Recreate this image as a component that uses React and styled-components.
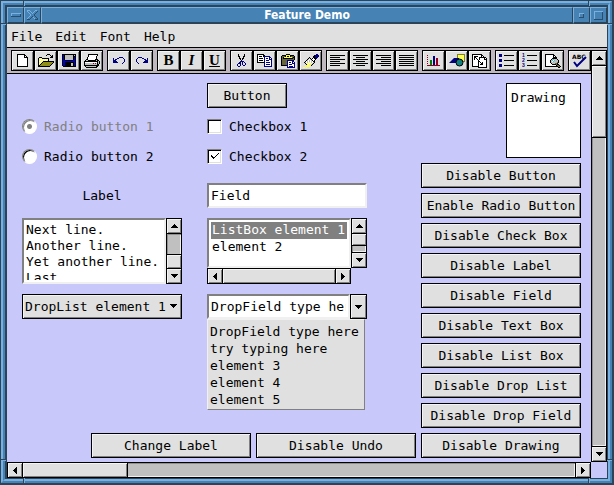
import styled, { createGlobalStyle, css } from 'styled-components';

const GlobalStyle = createGlobalStyle`
	* {
		box-sizing: border-box;
	}

	body {
		margin: 0;
		background-color: #4682b4;
	}

	body,
	button,
	input,
	select,
	textarea {
		font-family: 'DejaVu Sans Mono', monospace;
		font-size: 13px;
		line-height: 17px;
		color: #000;
	}
`;

const steel = '#4682b4';
const steelLight = '#78b0e0';
const steelDark = '#2b4459';

const raised = css`
	background-color: #e0e0e0;
	box-shadow: inset 1px 1px 0 #f4f4f4, inset -1px -1px 0 #808080;
`;

const sunken = css`
	background-color: #fff;
	border: 2px solid;
	border-color: #808080 #f0f0f0 #f0f0f0 #808080;
`;

/* Window frame */

const Frame = styled.div`
	position: relative;
	min-height: 100vh;
	display: flex;
	border: solid ${steelDark};
	border-width: 1px 2px 2px 1px;
`;

const OuterRidge = styled.div`
	flex: 1;
	min-width: 0;
	display: flex;
	border: 2px solid;
	border-color: ${steelLight} ${steel} ${steel} ${steelLight};
`;

const InnerRidge = styled.div`
	flex: 1;
	min-width: 0;
	display: flex;
	border: 2px solid;
	border-color: ${steel} ${steelLight} ${steelLight} ${steel};
`;

const Window = styled.div`
	flex: 1;
	min-width: 0;
	display: flex;
	flex-direction: column;
	border: solid ${steelDark};
	border-width: 2px 1px 1px 2px;
`;

const Notch = styled.i`
	position: absolute;
	${(p) => p.$edge}: 0;
	${(p) => p.$near}: 22px;
	background-color: ${steelLight};
	${(p) =>
		p.$edge === 'top' || p.$edge === 'bottom'
			? `width: 2px; height: 5px; border-left: 1px solid ${steelDark};`
			: `width: 5px; height: 2px; border-top: 1px solid ${steelDark};`}
`;

const TitleBar = styled.header`
	display: grid;
	grid-template-columns: 17px 17px 1fr 17px 17px;
	height: 17px;
`;

const titlePiece = css`
	border: solid;
	border-width: 1px 1px 2px 1px;
	border-color: ${steelLight} ${steelDark} ${steelDark} ${steelLight};
	background-color: ${steel};
`;

const TitleButton = styled.button`
	${titlePiece}
	display: grid;
	place-items: center;
	padding: 0;
`;

const Title = styled.h1`
	${titlePiece}
	margin: 0;
	font: bold 12px/14px 'DejaVu Sans Condensed', 'DejaVu Sans', sans-serif;
	text-align: center;
	color: #fff;
`;

/* Menu and toolbar */

const MenuBar = styled.nav`
	display: flex;
	gap: 5px;
	height: 24px;
	background-color: #e0e0e0;
	border-bottom: 1px solid #000;
`;

const MenuItem = styled.button`
	padding: 2px 4px 0;
	border: 0;
	background: none;
`;

const Main = styled.div`
	flex: 1;
	display: grid;
	grid-template-columns: minmax(0, 1fr) 16px;
	grid-template-rows: 1fr 16px;
	background-color: #c8c8fa;
`;

const Pane = styled.div`
	display: flex;
	flex-direction: column;
`;

const Toolbar = styled.div`
	display: flex;
	gap: 4px;
	padding: 2px 0 2px 4px;
	background-color: #c0b8c0;
	border-bottom: 1px solid #000;
`;

const ToolGroup = styled.div`
	display: flex;
`;

const Tool = styled.button`
	${raised}
	display: grid;
	place-items: center;
	width: 23px;
	height: 21px;
	padding: 0;
	border: 1px solid #000;
	font: bold 15px/15px 'Liberation Serif', serif;
	font-style: ${(p) => (p.$italic ? 'italic' : 'normal')};
	text-decoration: ${(p) => (p.$underline ? 'underline' : 'none')};

	& svg {
		display: block;
	}
`;

/* Scroll bars */

const Bar = styled.div`
	display: flex;
	flex-direction: ${(p) => (p.$vertical ? 'column' : 'row')};
	${(p) => (p.$vertical ? 'width: 16px;' : 'height: 16px;')}
	border: 1px solid #000;
	background-color: #c0c0c0;
`;

const BarArrow = styled.button`
	${raised}
	flex: none;
	display: grid;
	place-items: center;
	width: 14px;
	height: 14px;
	padding: 0;
	border: 0;
`;

const BarTrack = styled.div`
	flex: 1;
	min-width: 0;
	min-height: 0;
	display: flex;
	flex-direction: ${(p) => (p.$vertical ? 'column' : 'row')};
	justify-content: ${(p) => (p.$atEnd ? 'flex-end' : 'flex-start')};
	border: solid #000;
	border-width: ${(p) => (p.$vertical ? '1px 0' : '0 1px')};
	box-shadow: inset 1px 1px 0 #909090, inset -1px -1px 0 #f0f0f0;
`;

const BarThumb = styled.div`
	${raised}
	flex: 0 0 ${(p) => p.$size};
	border: 0 solid #000;
	${(p) => {
		if (p.$size === '100%') return '';
		const side = p.$atEnd
			? p.$vertical ? 'top' : 'left'
			: p.$vertical ? 'bottom' : 'right';
		return `border-${side}-width: 1px;`;
	}}
`;

const MainScrollColumn = styled.div`
	display: flex;
	padding-top: 2px;
	background-color: #c0b8c0;
`;

/* Form controls */

const Form = styled.form`
	flex: 1;
	display: flex;
	gap: 5px;
	padding: 9px 10px 4px 15px;
`;

const Side = styled.div`
	flex: 1;
	display: flex;
	flex-direction: column;
	justify-content: space-between;
`;

const Widgets = styled.div`
	display: grid;
	grid-template-columns: 160px 160px;
	grid-template-rows: 36px 30px 34px 35px 76px 25px;
	column-gap: 25px;
	align-items: start;
`;

const Actions = styled.div`
	display: flex;
	justify-content: flex-end;
	gap: 5px;
`;

const ButtonColumn = styled.div`
	display: flex;
	flex-direction: column;
	gap: 5px;
`;

const Button = styled.button`
	${raised}
	width: ${(p) => (p.$small ? '80px' : '160px')};
	height: 25px;
	padding: 0;
	border: 1px solid #000;
	white-space: nowrap;
	grid-column: ${(p) => (p.$small ? '2' : 'auto')};
`;

const Drawing = styled.div`
	align-self: flex-end;
	width: 75px;
	height: 75px;
	padding: 5px 4px;
	border: 1px solid #000;
	background-color: #fff;
`;

const Choice = styled.label`
	position: relative;
	display: flex;
	align-items: center;
	gap: 7px;
	height: 15px;
	color: ${(p) => (p.$disabled ? '#808080' : '#000')};

	& svg {
		position: absolute;
		left: 4px;
		top: 4px;
		pointer-events: none;
	}
`;

const Radio = styled.input`
	appearance: none;
	width: 15px;
	height: 15px;
	margin: 0;
	border: 1px solid;
	border-color: #808080 #fff #fff #808080;
	border-radius: 50%;
	background-color: #fff;
	box-shadow: inset 1px 1px 0 #000;

	&:disabled {
		box-shadow: inset 1px 1px 0 #808080;
	}

	&:checked {
		background-image: radial-gradient(circle, #808080 2px, transparent 3px);
	}
`;

const Checkbox = styled.input`
	appearance: none;
	width: 15px;
	height: 15px;
	margin: 0;
	border: 1px solid;
	border-color: #808080 #fff #fff #808080;
	background-color: #fff;
	box-shadow: inset 1px 1px 0 #000, inset -1px -1px 0 #e0e0e0;
`;

const Caption = styled.p`
	margin: 0;
	line-height: 25px;
	text-align: center;
`;

const Field = styled.input`
	${sunken}
	width: 100%;
	min-width: 0;
	height: 25px;
	padding: 0 2px;
	border-radius: 0;
`;

const TextBox = styled.div`
	display: flex;
	height: 66px;
`;

const TextWell = styled.div`
	${sunken}
	flex: 1;
	min-width: 0;
	padding: 2px 0;
`;

const TextArea = styled.textarea`
	display: block;
	width: 100%;
	height: 58px;
	padding: 0 2px;
	border: 0;
	line-height: 16px;
	white-space: pre;
	overflow: hidden;
	resize: none;
`;

const ListBox = styled.div`
	display: grid;
	grid-template-columns: minmax(0, 1fr) 16px;
	grid-template-rows: 50px 16px;
`;

const ListWell = styled.div`
	${sunken}
	padding: 2px;
	overflow: hidden;
`;

const List = styled.select`
	display: block;
	width: 100%;
	height: 42px;
	padding: 0;
	border: 0;
	outline: 0;
	border-radius: 0;
	background-color: #fff;
	overflow: hidden;
	scrollbar-width: none;

	& option {
		min-height: 17px;
		padding: 0 1px;
	}

	& option:checked {
		background: #808080 linear-gradient(#808080, #808080);
		-webkit-text-fill-color: #fff;
	}
`;

const DropListShell = styled.div`
	position: relative;

	& svg {
		position: absolute;
		right: 5px;
		top: 10px;
		pointer-events: none;
	}
`;

const DropList = styled.select`
	${raised}
	appearance: none;
	display: block;
	width: 100%;
	height: 25px;
	padding: 0 2px;
	border: 1px solid #000;
	border-radius: 0;
`;

const DropField = styled.div`
	position: relative;
	display: flex;
`;

const DropButton = styled.button`
	${raised}
	flex: none;
	display: grid;
	place-items: center;
	width: 17px;
	height: 25px;
	padding: 0;
	border: 1px solid #000;
`;

const Popup = styled.ul`
	position: absolute;
	top: 100%;
	left: 0;
	right: 2px;
	margin: 0;
	padding: 3px 2px 1px;
	list-style: none;
	background-color: #e0e0e0;
	border: 1px solid;
	border-color: #f0f0f0 #808080 #808080 #f0f0f0;
	white-space: nowrap;
`;

/* Drawings */

const palette = {
	k: '#000',
	w: '#fff',
	g: '#c0c0c0',
	y: '#ffff50',
	o: '#909018',
	d: '#66663a',
	b: '#0000d0',
	n: '#000080',
	r: '#900020',
	G: '#008000',
	c: '#40c8d0',
	s: steelLight,
	t: '#294d6d',
};

// Each string is a row, each letter a palette colour.
const Pixels = ({ rows }) => {
	const width = Math.max(...rows.map((row) => row.length));
	return (
		<svg
			width={width}
			height={rows.length}
			shapeRendering="crispEdges"
			aria-hidden="true"
		>
			{rows.flatMap((row, y) =>
				[...row].map((cell, x) =>
					palette[cell] ? (
						<rect
							key={`${x}-${y}`}
							x={x}
							y={y}
							width="1"
							height="1"
							fill={palette[cell]}
						/>
					) : null
				)
			)}
		</svg>
	);
};

const mirror = (rows) => rows.map((row) => [...row].reverse().join(''));

const arrows = {
	up: ['...k...', '..kkk..', '.kkkkk.', 'kkkkkkk'],
	down: ['kkkkkkk', '.kkkkk.', '..kkk..', '...k...'],
	left: ['...k', '..kk', '.kkk', 'kkkk', '.kkk', '..kk', '...k'],
	right: ['k...', 'kk..', 'kkk.', 'kkkk', 'kkk.', 'kk..', 'k...'],
};

const undoRows = [
	'......nnnn..',
	'n...nn....n.',
	'n.nn.......n',
	'nnn........n',
	'nnnn.......n',
	'nnnnn.....n.',
	'.........n..',
];

const art = {
	minimize: ['ssssssssss', 's........t', 's........t', 'tttttttttt'],
	close: [
		'sss.....ss.',
		's..s...s..t',
		'.s..s.s..t.',
		'..s..s..t..',
		'...s...t...',
		'...s...t...',
		'..s..t..t..',
		'.s..t.s..t.',
		's..t...s..t',
		'ttt.....ttt',
	],
	iconify: ['sssss', 's...t', 's...t', 's...t', 'ttttt'],
	maximize: [
		'sssssssss',
		's.......t',
		's.......t',
		's.......t',
		's.......t',
		's.......t',
		's.......t',
		's.......t',
		'ttttttttt',
	],
	check: ['.......k', '......k.', 'k....k..', 'kk..k...', '.kkk....', '..k.....'],
	page: [
		'kkkkkkkk...',
		'kwwwwwwkk..',
		'kwwwwwwkwk.',
		'kwwwwwwkkkk',
		'kwwwwwwwwwk',
		'kwwwwwwwwwk',
		'kwwwwwwwwwk',
		'kwwwwwwwwwk',
		'kwwwwwwwwwk',
		'kwwwwwwwwwk',
		'kwwwwwwwwwk',
		'kwwwwwwwwwk',
		'kkkkkkkkkkk',
	],
	open: [
		'.........kkk....',
		'........k...k.k.',
		'.............kk.',
		'.kkk........kkk.',
		'kywykkkkkkk.....',
		'kwywywywywk.....',
		'kywywywywyk.....',
		'kwywykkkkkkkkkkk',
		'kywykooooooooook',
		'kwykooooooooook.',
		'kykooooooooook..',
		'kkooooooooook...',
		'kkkkkkkkkkkk....',
	],
	save: [
		'kkkkkkkkkkkkkk',
		'kbkggggggggkgk',
		'kbkggggggggkkk',
		'kbkggggggggkbk',
		'kbkggggggggkbk',
		'kbkggggggggkbk',
		'kbbkkkkkkkkbbk',
		'kbbbbbbbbbbbbk',
		'kbbkkkkkkkkkbk',
		'kbbkkkkkkggkbk',
		'kbbkkkkkkggkbk',
		'kbbkkkkkkggkbk',
		'.kkkkkkkkkkkkk',
	],
	print: [
		'....kkkkkkkkkk..',
		'....kwwwwwwwwk..',
		'....kwwwwwwwk...',
		'...kwwwwwwwwk...',
		'...kwwwwwwwwk...',
		'..kkwwwwwwwkkk..',
		'.kggkkkkkkkkgkk.',
		'kkkkkkkkkkkkkkgk',
		'kwwwwwwwwwwwwkgk',
		'kggggggggrgrgkgk',
		'kggggggggggggkk.',
		'kkkkkkkkkkkkkkk.',
		'.kggggggggggkk..',
		'..kkkkkkkkkkk...',
	],
	undo: undoRows,
	redo: mirror(undoRows),
	cut: [
		'.k.....k.',
		'.k.....k.',
		'.kk...kk.',
		'..k...k..',
		'..kk.kk..',
		'...k.k...',
		'....k....',
		'...nnnn..',
		'..nn.n.n.',
		'.nnn.n..n',
		'n..n.n..n',
		'n..n..nn.',
		'.nn......',
	],
	copy: [
		'kkkkkkk........',
		'kwwwwwkk.......',
		'kwkkkwknnnnnn..',
		'kwwwwwwnwwwwnn.',
		'kwkkkkwnwnnwnwn',
		'kwwwwwwnwwwwnnn',
		'kwkkkkwnwnnnwwn',
		'kwwwwwwnwwwwwwn',
		'kkkkkkknwnnnnwn',
		'.......nwwwwwwn',
		'.......nwnnnnwn',
		'.......nwwwwwwn',
		'.......nnnnnnnn',
	],
	paste: [
		'......kkkk......',
		'..kkkkyyyykkkk..',
		'.kdddkykkykdddk.',
		'.kdkyyyyyyyydkk.',
		'.kdkkkkkkkkkkdk.',
		'.kddddddddddddk.',
		'.kdddddnnnnnnk..',
		'.kdddddnwwwwnn..',
		'.kdddddnwnnwnwn.',
		'.kdddddnwwwwnnn.',
		'.kdddddnwnnnwwn.',
		'.kkkkkknwwwwwwn.',
		'.......nwnnnnwn.',
		'.......nnnnnnnn.',
	],
	brush: [
		'.............nn.',
		'...........knnnn',
		'..........kknnnn',
		'......k...kknnn.',
		'.....kgk.kwkkn..',
		'....kgwgkwwwk...',
		'...kgwgwgkwk....',
		'..kwgwgwgwkk....',
		'.kgwgwywgwgk....',
		'..kywywywgk.....',
		'...kywyygk......',
		'...yyyyyk.......',
		'..y.yyy.........',
		'yy.y............',
	],
	chart: [
		'r............',
		'......nn.....',
		'r.....nn.....',
		'......nn.rr..',
		'r.....nn.rr..',
		'...GG.nn.rr..',
		'r..GG.nn.rr..',
		'...GG.nn.rr..',
		'r..GG.nn.rr..',
		'...GG.nn.rr..',
		'rrrrrrrrrrrrr',
	],
	frames: [
		'kkkkkkkkkk.....',
		'kwwwwwwwwkk....',
		'kwkkkkwwwkwk...',
		'kwkkwwwkkkkkkk.',
		'kwkwkwwkwwwwkwk',
		'kwkwwkwkwwwwkkk',
		'kwwwwwkwwwwwwwk',
		'kwwwwwkkwwwwwwk',
		'kwwwwwkwkwkwwwk',
		'kwwwwwkwwkkwwwk',
		'kwwwwwkwkkkwwwk',
		'kwwwwwkwwwwwwwk',
		'kkkkkkkwwwwwwwk',
		'......kkkkkkkkk',
	],
	preview: [
		'kkkkkkkkk.......',
		'kwwwwwwwkk......',
		'kwwwwwwwkwk.....',
		'kwwwwwwwkkkk....',
		'kwwwwwwkkkkk....',
		'kwwwwwkgcgggk...',
		'kwwwwkgcwcgggk..',
		'kwwwwkgwcggggk..',
		'kwwwwkggggggdk..',
		'kwwwwwkgggddk...',
		'kwwwwwwkkkkdkk..',
		'kwwwwwwwwwwkddk.',
		'kkkkkkkkkkkkkddk',
		'.............kk.',
	],
	bullets: [
		'nnn............',
		'nnn..kkkkkkkkkk',
		'nnn............',
		'...............',
		'...............',
		'nnn............',
		'nnn..kkkkkkkkkk',
		'nnn............',
		'...............',
		'...............',
		'nnn............',
		'nnn..kkkkkkkkkk',
		'nnn............',
	],
};

const alignLines = (short, before) =>
	Array.from({ length: 11 }, (_, i) => {
		if (i % 2) return '';
		if (i % 4 === 0) return 'k'.repeat(15);
		return '.'.repeat(before) + 'k'.repeat(short);
	});

const ShapesIcon = () => (
	<svg width="16" height="13" aria-hidden="true">
		<rect x="8" y="0" width="8" height="7" fill="#ffff50" />
		<rect x="8.5" y="0.5" width="7" height="7" fill="none" stroke="#000" strokeDasharray="1 1" />
		<path d="M0 9L5 4h5v5z" fill="#000080" />
		<circle cx="10.5" cy="8.5" r="3.5" fill="#108080" stroke="#000" />
	</svg>
);

const NumberedIcon = () => (
	<svg width="15" height="15" aria-hidden="true">
		<g fill="#000080" fontFamily="Liberation Sans" fontSize="5" fontWeight="bold">
			<text x="0" y="4">1</text>
			<text x="0" y="9">2</text>
			<text x="0" y="14">3</text>
		</g>
		<path d="M5 2.5h10M5 7.5h10M5 12.5h10" stroke="#000" />
	</svg>
);

const SpellingIcon = () => (
	<svg width="15" height="15" aria-hidden="true">
		<text x="0" y="6" fontFamily="DejaVu Sans" fontSize="6">
			ABC
		</text>
		<path d="M2 9l3 4 9-9" fill="none" stroke="#000080" strokeWidth="2" />
	</svg>
);

const toolGroups = [
	[
		{ label: 'New', icon: <Pixels rows={art.page} /> },
		{ label: 'Open', icon: <Pixels rows={art.open} /> },
		{ label: 'Save', icon: <Pixels rows={art.save} /> },
		{ label: 'Print', icon: <Pixels rows={art.print} /> },
	],
	[
		{ label: 'Undo', icon: <Pixels rows={art.undo} /> },
		{ label: 'Redo', icon: <Pixels rows={art.redo} /> },
	],
	[
		{ label: 'Bold', icon: 'B' },
		{ label: 'Italic', icon: 'I', italic: true },
		{ label: 'Underline', icon: 'U', underline: true },
	],
	[
		{ label: 'Cut', icon: <Pixels rows={art.cut} /> },
		{ label: 'Copy', icon: <Pixels rows={art.copy} /> },
		{ label: 'Paste', icon: <Pixels rows={art.paste} /> },
		{ label: 'Format painter', icon: <Pixels rows={art.brush} /> },
	],
	[
		{ label: 'Align left', icon: <Pixels rows={alignLines(10, 0)} /> },
		{ label: 'Align center', icon: <Pixels rows={alignLines(9, 3)} /> },
		{ label: 'Align right', icon: <Pixels rows={alignLines(10, 5)} /> },
		{ label: 'Justify', icon: <Pixels rows={alignLines(15, 0)} /> },
	],
	[
		{ label: 'Chart', icon: <Pixels rows={art.chart} /> },
		{ label: 'Shapes', icon: <ShapesIcon /> },
		{ label: 'Resize', icon: <Pixels rows={art.frames} /> },
	],
	[
		{ label: 'Bullets', icon: <Pixels rows={art.bullets} /> },
		{ label: 'Numbering', icon: <NumberedIcon /> },
		{ label: 'Preview', icon: <Pixels rows={art.preview} /> },
	],
	[{ label: 'Spelling', icon: <SpellingIcon /> }],
];

const notches = [
	['top', 'left'],
	['top', 'right'],
	['bottom', 'left'],
	['bottom', 'right'],
	['left', 'top'],
	['left', 'bottom'],
	['right', 'top'],
	['right', 'bottom'],
];

const ScrollBar = ({ vertical, size, atEnd }) => (
	<Bar $vertical={vertical}>
		<BarArrow type="button" aria-label={vertical ? 'Scroll up' : 'Scroll left'}>
			<Pixels rows={vertical ? arrows.up : arrows.left} />
		</BarArrow>
		<BarTrack $vertical={vertical} $atEnd={atEnd}>
			<BarThumb $vertical={vertical} $atEnd={atEnd} $size={size} />
		</BarTrack>
		<BarArrow type="button" aria-label={vertical ? 'Scroll down' : 'Scroll right'}>
			<Pixels rows={vertical ? arrows.down : arrows.right} />
		</BarArrow>
	</Bar>
);

const toggles = [
	'Disable Button',
	'Enable Radio Button',
	'Disable Check Box',
	'Disable Label',
	'Disable Field',
	'Disable Text Box',
	'Disable List Box',
	'Disable Drop List',
	'Disable Drop Field',
	'Disable Drawing',
];

const suggestions = [
	'DropField type here',
	'try typing here',
	'element 3',
	'element 4',
	'element 5',
];

const DemoForm = () => (
	<Form>
		<Side>
			<Widgets>
				<Button type="button" $small>Button</Button>
				<Choice $disabled>
					<Radio type="radio" name="radio" defaultChecked disabled />
					Radio button 1
				</Choice>
				<Choice>
					<Checkbox type="checkbox" />
					Checkbox 1
				</Choice>
				<Choice>
					<Radio type="radio" name="other-radio" />
					Radio button 2
				</Choice>
				<Choice>
					<Checkbox type="checkbox" defaultChecked />
					<Pixels rows={art.check} />
					Checkbox 2
				</Choice>
				<Caption>Label</Caption>
				<Field aria-label="Field" defaultValue="Field" />
				<TextBox>
					<TextWell>
						<TextArea
							aria-label="Text box"
							defaultValue={'Next line.\nAnother line.\nYet another line.\nLast'}
						/>
					</TextWell>
					<ScrollBar vertical atEnd size="41%" />
				</TextBox>
				<ListBox>
					<ListWell>
						<List size={2} aria-label="List box" defaultValue="1">
							<option value="1">ListBox element 1</option>
							<option value="2">element 2</option>
						</List>
					</ListWell>
					<ScrollBar vertical size="64%" />
					<ScrollBar size="100%" />
				</ListBox>
				<DropListShell>
					<DropList aria-label="Drop list">
						<option>DropList element 1</option>
					</DropList>
					<Pixels rows={arrows.down} />
				</DropListShell>
				<DropField>
					<Field
						role="combobox"
						aria-label="Drop field"
						aria-expanded="true"
						aria-controls="suggestions"
						defaultValue="DropField type here"
					/>
					<DropButton type="button" aria-label="Show suggestions">
						<Pixels rows={arrows.down} />
					</DropButton>
					<Popup id="suggestions" role="listbox">
						{suggestions.map((text) => (
							<li key={text} role="option" aria-selected="false">
								{text}
							</li>
						))}
					</Popup>
				</DropField>
			</Widgets>
			<Actions>
				<Button type="button">Change Label</Button>
				<Button type="button">Disable Undo</Button>
			</Actions>
		</Side>
		<ButtonColumn>
			<Drawing>Drawing</Drawing>
			{toggles.map((text) => (
				<Button type="button" key={text}>
					{text}
				</Button>
			))}
		</ButtonColumn>
	</Form>
);

const App = () => (
	<Frame>
		<GlobalStyle />
		{notches.map(([edge, near]) => (
			<Notch key={edge + near} $edge={edge} $near={near} />
		))}
		<OuterRidge>
			<InnerRidge>
				<Window>
					<TitleBar>
						<TitleButton aria-label="Window menu">
							<Pixels rows={art.minimize} />
						</TitleButton>
						<TitleButton aria-label="Close">
							<Pixels rows={art.close} />
						</TitleButton>
						<Title>Feature Demo</Title>
						<TitleButton aria-label="Minimize">
							<Pixels rows={art.iconify} />
						</TitleButton>
						<TitleButton aria-label="Maximize">
							<Pixels rows={art.maximize} />
						</TitleButton>
					</TitleBar>
					<MenuBar>
						{['File', 'Edit', 'Font', 'Help'].map((name) => (
							<MenuItem key={name}>{name}</MenuItem>
						))}
					</MenuBar>
					<Main>
						<Pane>
							<Toolbar>
								{toolGroups.map((group) => (
									<ToolGroup key={group[0].label}>
										{group.map((tool) => (
											<Tool
												key={tool.label}
												aria-label={tool.label}
												$italic={tool.italic}
												$underline={tool.underline}
											>
												{tool.icon}
											</Tool>
										))}
									</ToolGroup>
								))}
							</Toolbar>
							<DemoForm />
						</Pane>
						<MainScrollColumn>
							<ScrollBar vertical size="19%" />
						</MainScrollColumn>
						<ScrollBar size="19%" />
					</Main>
				</Window>
			</InnerRidge>
		</OuterRidge>
	</Frame>
);

export default App;
